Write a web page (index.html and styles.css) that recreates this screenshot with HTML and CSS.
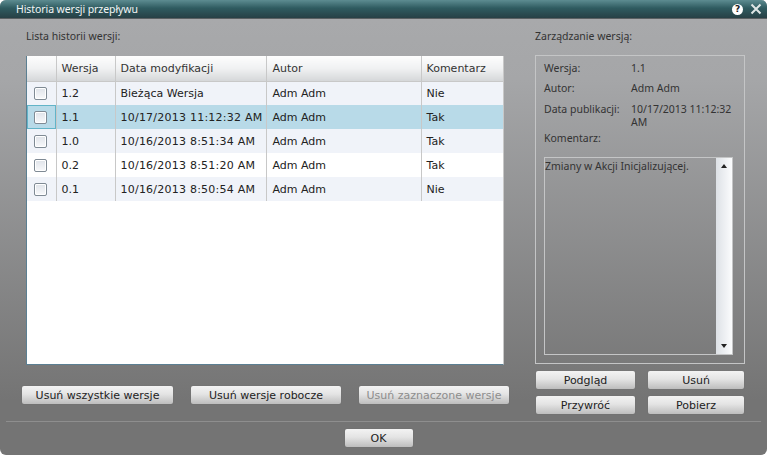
FILE: index.html
```html
<!DOCTYPE html>
<html lang="en">
<head>
    <meta charset="UTF-8">
    <title>Historia wersji przepływu</title>
    <link rel="stylesheet" href="styles.css">
</head>
<body>
<div class="dialog">
    <div class="titlebar">
        <span class="title">Historia wersji przepływu</span>
        <span class="help">?</span>
        <svg class="close" width="12" height="12" viewBox="0 0 12 12"><path d="M1.5 1.5 L10.5 10.5 M10.5 1.5 L1.5 10.5" stroke="#dfe6e6" stroke-width="2"/></svg>
    </div>
    <div class="content">
        <div class="left">
            <div class="caption">Lista historii wersji:</div>
            <div class="grid-box">
                <table class="grid">
                    <thead>
                        <tr>
                            <th class="col-check"></th>
                            <th class="col-ver">Wersja</th>
                            <th class="col-date">Data modyfikacji</th>
                            <th class="col-author">Autor</th>
                            <th>Komentarz</th>
                        </tr>
                    </thead>
                    <tbody>
                        <tr class="alt">
                            <td class="cell-check"><span class="check"></span></td>
                            <td>1.2</td><td>Bieżąca Wersja</td><td class="author">Adm Adm</td><td>Nie</td>
                        </tr>
                        <tr class="selected">
                            <td class="cell-check focused"><span class="check"></span></td>
                            <td>1.1</td><td class="date">10/17/2013 11:12:32 AM</td><td class="author">Adm Adm</td><td>Tak</td>
                        </tr>
                        <tr class="alt">
                            <td class="cell-check"><span class="check"></span></td>
                            <td>1.0</td><td class="date">10/16/2013 8:51:34 AM</td><td class="author">Adm Adm</td><td>Tak</td>
                        </tr>
                        <tr>
                            <td class="cell-check"><span class="check"></span></td>
                            <td>0.2</td><td class="date">10/16/2013 8:51:20 AM</td><td class="author">Adm Adm</td><td>Tak</td>
                        </tr>
                        <tr class="alt">
                            <td class="cell-check"><span class="check"></span></td>
                            <td>0.1</td><td class="date">10/16/2013 8:50:54 AM</td><td class="author">Adm Adm</td><td>Nie</td>
                        </tr>
                    </tbody>
                </table>
            </div>
            <div class="left-buttons">
                <button class="btn btn-all">Usuń wszystkie wersje</button>
                <button class="btn btn-drafts">Usuń wersje robocze</button>
                <button class="btn btn-selected" disabled>Usuń zaznaczone wersje</button>
            </div>
        </div>
        <div class="right">
            <div class="caption caption-right">Zarządzanie wersją:</div>
            <div class="manage">
                <div class="info"><span class="label">Wersja:</span><span>1.1</span></div>
                <div class="info"><span class="label">Autor:</span><span>Adm Adm</span></div>
                <div class="info info-date"><span class="label">Data publikacji:</span><span>10/17/2013 11:12:32 AM</span></div>
                <div class="info"><span class="label">Komentarz:</span></div>
                <div class="comment">
                    <div class="comment-text">Zmiany w Akcji Inicjalizującej.</div>
                    <div class="scrollbar">
                        <span class="arrow-up"></span>
                        <span class="arrow-down"></span>
                    </div>
                </div>
            </div>
            <div class="right-buttons">
                <button class="btn">Podgląd</button>
                <button class="btn">Usuń</button>
                <button class="btn">Przywróć</button>
                <button class="btn">Pobierz</button>
            </div>
        </div>
    </div>
    <div class="footer">
        <button class="btn btn-ok">OK</button>
    </div>
</div>
</body>
</html>
```

FILE: styles.css
```css
body {
    margin: 0;
    background-color: #fff;
}
.dialog {
    width: 767px;
    height: 455px;
    display: flex;
    flex-direction: column;
    border-radius: 6px;
    overflow: hidden;
    background: linear-gradient(#a9aaac 0, #a5a6a8 80px, #747474 400px, #747474 100%);
    font-family: "Noto Sans", sans-serif;
    font-size: 10.5px;
    color: #333;
}
.titlebar {
    height: 18px;
    flex: none;
    display: flex;
    align-items: center;
    padding: 0 5px 0 16px;
    background: linear-gradient(#5d8c91, #2f5b60 45%, #274045);
    border-bottom: 1px solid #5b6062;
    color: #f2f5f5;
}
.title {
    flex: 1;
    letter-spacing: -0.08px;
}
.help {
    width: 11px;
    height: 11px;
    border-radius: 50%;
    background-color: #fff;
    color: #222;
    font-family: "DejaVu Sans", sans-serif;
    font-size: 9px;
    font-weight: bold;
    line-height: 11px;
    text-align: center;
    margin-right: 7px;
}
.content {
    flex: 1;
    display: flex;
    padding: 10px 22px 0 26px;
}
.caption {
    height: 27px;
    line-height: 14px;
}
.caption-right {
    height: 26px;
}
.left {
    width: 478px;
}
.grid-box {
    height: 309px;
    box-sizing: border-box;
    background-color: #fff;
    border: 1px solid #5b7f92;
    border-top: none;
    border-right-color: #c8c8c8;
}
.grid {
    width: 100%;
    border-collapse: collapse;
    table-layout: fixed;
    font-family: "DejaVu Sans", sans-serif;
    font-size: 11px;
    color: #222;
}
.grid th {
    height: 25px;
    padding: 0 5px;
    text-align: left;
    font-weight: normal;
    color: #333;
    background: linear-gradient(#fdfdfd, #f0f1f2 50%, #d5d7d9);
    border-left: 1px solid #c8c8c8;
    border-bottom: 1px solid #c8c8c8;
    box-sizing: border-box;
}
.grid th:first-child {
    border-left: none;
}
.grid td {
    height: 24px;
    padding: 0 5px;
    border-left: 1px solid #c8c8c8;
    white-space: nowrap;
    overflow: hidden;
    box-sizing: border-box;
}
.grid td:first-child {
    border-left: none;
}
.grid .date {
    letter-spacing: 0.23px;
}
.grid .author,
.grid .col-author {
    padding-left: 6px;
}
.col-check {
    width: 29px;
}
.col-ver {
    width: 59px;
}
.col-date {
    width: 151px;
}
.col-author {
    width: 155px;
}
.alt {
    background-color: #f0f3f9;
}
.selected {
    background-color: #b8dae8;
}
.grid .cell-check {
    padding: 0 2px 0 0;
    text-align: center;
}
.grid .focused {
    box-shadow: inset 0 0 0 1px #62b4c8;
}
.check {
    display: inline-block;
    width: 11px;
    height: 11px;
    vertical-align: middle;
    border: 1px solid #7f8a94;
    border-radius: 2px;
    background: linear-gradient(#dfe3e9, #f8f9fb);
    box-shadow: inset 0 0 0 1px #fff;
}
.left-buttons {
    display: flex;
    margin: 21px 0 0 -4px;
}
.btn {
    flex: none;
    height: 18px;
    padding: 0;
    border: none;
    border-radius: 2px;
    background: linear-gradient(#f3f3f3, #e4e4e4 45%, #bdbdbd);
    box-shadow: 0 0 1px #666;
    font-family: "DejaVu Sans", sans-serif;
    font-size: 11px;
    color: #222;
}
.btn:disabled {
    color: #8d8d8d;
}
.btn-all {
    width: 151px;
    margin-right: 18px;
}
.btn-drafts {
    width: 150px;
    margin-right: 18px;
}
.btn-selected {
    width: 150px;
}
.right {
    width: 210px;
    margin-left: 31px;
}
.manage {
    height: 309px;
    box-sizing: border-box;
    border: 1px solid #c4c5c6;
    padding: 5px 11px 8px 8px;
    display: flex;
    flex-direction: column;
}
.info {
    display: flex;
    min-height: 20px;
    line-height: 13px;
    padding-top: 1px;
    box-sizing: border-box;
}
.info-date {
    margin-top: 1px;
    min-height: 29px;
}
.info .label {
    flex: none;
    width: 87px;
}
.comment {
    flex: 1;
    margin-top: 6px;
    display: flex;
    border: 1px solid #c4c5c6;
}
.comment-text {
    flex: 1;
    line-height: 14px;
    padding-top: 1px;
}
.scrollbar {
    width: 16px;
    display: flex;
    flex-direction: column;
    justify-content: space-between;
    align-items: center;
    padding: 6px 0;
    box-sizing: border-box;
    background: linear-gradient(90deg, #dde1e6, #fbfcfd);
}
.arrow-up {
    border: 3px solid transparent;
    border-top: none;
    border-bottom: 4px solid #222;
}
.arrow-down {
    border: 3px solid transparent;
    border-bottom: none;
    border-top: 4px solid #222;
}
.right-buttons {
    display: grid;
    grid-template-columns: 99px 96px;
    column-gap: 13px;
    row-gap: 7px;
    margin: 7px 0 0 1px;
}
.footer {
    flex: none;
    height: 34px;
    margin: 0 6px;
    border-top: 1px solid #8e8e8e;
    display: flex;
    justify-content: center;
    padding: 7px 10px 0 0;
    box-sizing: border-box;
}
.btn-ok {
    width: 68px;
}
```
